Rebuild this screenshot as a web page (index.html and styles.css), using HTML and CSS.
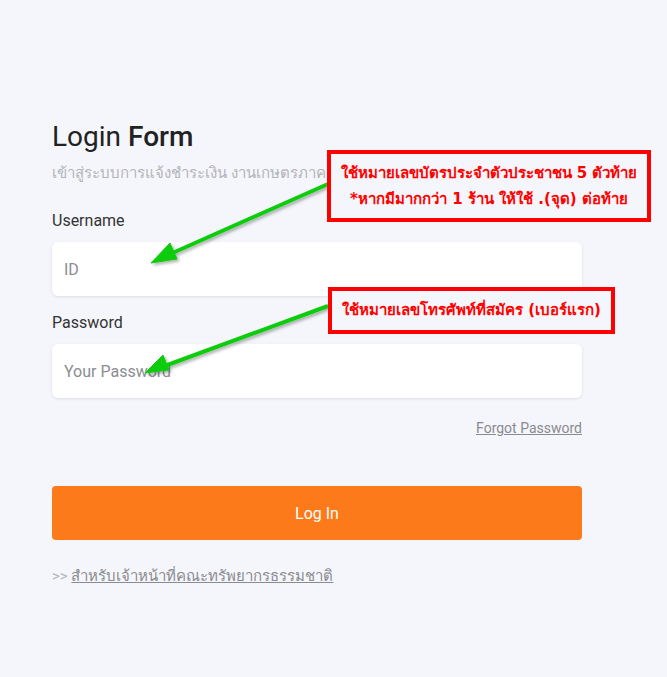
FILE: index.html
```html
<!DOCTYPE html>
<html lang="th">
<head>
    <meta charset="UTF-8">
    <meta name="viewport" content="width=device-width, initial-scale=1.0">
    <title>Login Form</title>
    <link rel="stylesheet" href="styles.css">
</head>
<body>
    <div class="page">
        <form class="login" onsubmit="return false">
            <h2 class="title">Login <b>Form</b></h2>
            <p class="subtitle">เข้าสู่ระบบการแจ้งชำระเงิน งานเกษตรภาคตะวันออก</p>

            <label class="label" for="username">Username</label>
            <input class="field" type="text" id="username" placeholder="ID">

            <label class="label label-next" for="password">Password</label>
            <input class="field" type="password" id="password" placeholder="Your Password">

            <div class="forgot"><a href="#">Forgot Password</a></div>

            <button class="btn-login" type="submit">Log In</button>

            <div class="staff">&gt;&gt; <a href="#">สำหรับเจ้าหน้าที่คณะทรัพยากรธรรมชาติ</a></div>
        </form>

        <!-- annotations drawn over the form -->
        <svg class="arrows" width="667" height="677" viewBox="0 0 667 677">
            <defs>
                <filter id="shadow" x="-20%" y="-20%" width="140%" height="140%">
                    <feDropShadow dx="2" dy="2" stdDeviation="1.5" flood-color="#000" flood-opacity="0.3"/>
                </filter>
            </defs>
            <g fill="#11cc11" stroke="#11cc11" filter="url(#shadow)">
                <line x1="328" y1="184" x2="168" y2="255" stroke-width="4"/>
                <polygon points="151,263 170,243 177,259" stroke-width="1"/>
                <line x1="328" y1="306" x2="162" y2="367" stroke-width="4"/>
                <polygon points="145,373 163,355 169,370" stroke-width="1"/>
            </g>
        </svg>
        <div class="note note-id">
            ใช้หมายเลขบัตรประจำตัวประชาชน 5 ตัวท้าย<br>
            *หากมีมากกว่า 1 ร้าน ให้ใช้ .(จุด) ต่อท้าย
        </div>
        <div class="note note-pass">
            ใช้หมายเลขโทรศัพท์ที่สมัคร (เบอร์แรก)
        </div>
    </div>
</body>
</html>
```

FILE: styles.css
```css
body {
    margin: 0;
    background: #f5f6fb;
    font-family: Roboto, "Noto Sans", sans-serif;
    color: #333;
}
.page {
    position: relative;
    width: 667px;
    height: 677px;
    overflow: hidden;
}
.login {
    width: 530px;
    margin-left: 52px;
    padding-top: 118px;
    display: flex;
    flex-direction: column;
}
.title {
    margin: 0;
    font-size: 28px;
    font-weight: 400;
    line-height: 38px;
    color: #222;
}
.title b {
    font-weight: 500;
}
.subtitle {
    margin: 6px 0 0;
    font-size: 15px;
    line-height: 22px;
    color: #b3b3b8;
    white-space: nowrap;
}
.label {
    margin-top: 26px;
    font-size: 16px;
    line-height: 22px;
    color: #333;
}
.label-next {
    margin-top: 16px;
}
.field {
    margin-top: 10px;
    height: 54px;
    padding: 0 12px;
    border: none;
    border-radius: 6px;
    background: #fff;
    box-shadow: 0 1px 3px rgba(0, 0, 0, 0.1);
    font-family: inherit;
    font-size: 16px;
    color: #333;
    outline: none;
}
.field::placeholder {
    color: #8a8d93;
}
.forgot {
    margin-top: 20px;
    text-align: right;
    font-size: 14px;
    line-height: 20px;
}
.forgot a,
.staff a {
    color: #8a8a8f;
}
.btn-login {
    margin-top: 48px;
    height: 54px;
    border: none;
    border-radius: 4px;
    background: #fd7a1b;
    color: #fff;
    font-family: inherit;
    font-size: 16px;
    cursor: pointer;
}
.staff {
    margin-top: 26px;
    font-size: 15px;
    line-height: 20px;
    color: #b3b3b8;
}
.arrows {
    position: absolute;
    left: 0;
    top: 0;
    pointer-events: none;
}
.note {
    position: absolute;
    box-sizing: border-box;
    border: 4px solid #ff0000;
    background: #f5f6fb;
    color: #ff0000;
    font-family: Tahoma, "DejaVu Sans", sans-serif;
    font-weight: 700;
    font-size: 15px;
    text-align: center;
}
.note-id {
    left: 327px;
    top: 150px;
    width: 324px;
    height: 72px;
    padding-top: 6px;
    line-height: 26px;
}
.note-pass {
    left: 328px;
    top: 287px;
    width: 287px;
    height: 47px;
    line-height: 39px;
}
```
